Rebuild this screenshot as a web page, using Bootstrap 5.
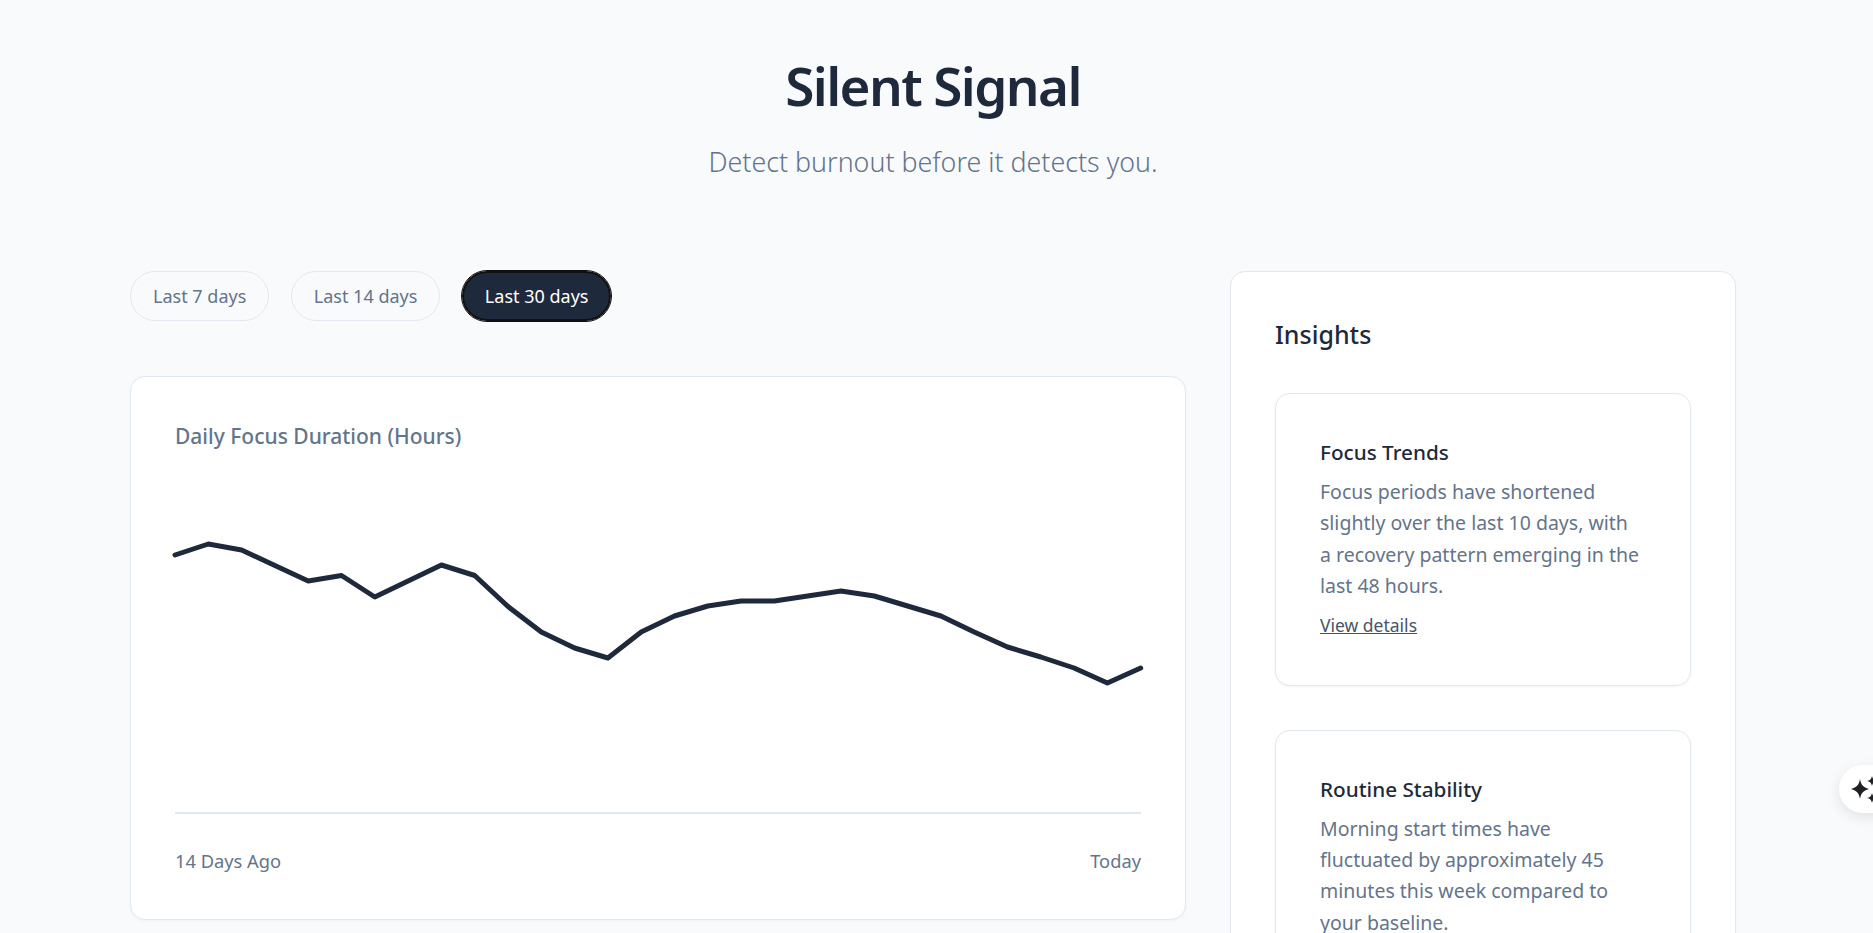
<!DOCTYPE html>
<html lang="en">

<head>
    <meta charset="UTF-8">
    <meta name="viewport" content="width=device-width, initial-scale=1.0">
    <title>Silent Signal</title>
    <link href="https://cdn.jsdelivr.net/npm/bootstrap@5.3.0/dist/css/bootstrap.min.css" rel="stylesheet">
    <style>
        html, body {
            height: 100vh;
            overflow: hidden;
        }
        body {
            background-color: #f8fafc;
            color: #1e293b;
            font-family: "Noto Sans", "Open Sans", sans-serif;
            padding-right: 7px;
        }
        .page-wrap {
            width: 1606px;
            margin: 0 auto;
        }
        .page-head {
            padding-top: 50px;
            height: 271px;
        }
        .page-title {
            font-size: 53px;
            font-weight: 560;
            line-height: 72px;
            margin-bottom: 22px;
            letter-spacing: -1.6px;
        }
        .page-sub {
            font-size: 26.8px;
            font-weight: 300;
            line-height: 36px;
            color: #64748b;
            margin: 0;
        }
        .main-col {
            width: 1056px;
        }
        .side-col {
            width: 506px;
        }
        .range-btn {
            height: 50px;
            padding: 0 22px;
            font-size: 18px;
            color: #64748b;
            background: transparent;
            border: 1px solid #e2e8f0;
            border-radius: 25px;
        }
        .range-btn.is-on {
            padding: 0 21px;
            color: #fff;
            background: #1e293b;
            border: 2px solid #111;
            outline: 1px solid #111;
        }
        .range-row {
            gap: 21.5px;
            height: 105px;
        }
        .panel-box {
            background: #fff;
            border: 1px solid #e2e8f0;
            border-radius: 15px;
            box-shadow: 0 1px 3px rgba(0, 0, 0, .04);
        }
        .chart-box {
            height: 544px;
            padding: 44px;
        }
        .chart-title {
            font-size: 21px;
            font-weight: 500;
            color: #64748b;
            line-height: 30px;
            margin: 0;
        }
        .chart-area {
            height: 363px;
            border-bottom: 2px solid #e2e8f0;
        }
        .chart-area svg {
            display: block;
            overflow: visible;
        }
        .chart-axis {
            font-size: 18.3px;
            line-height: 26px;
            color: #64748b;
            margin-top: 34px;
        }
        .side-box {
            padding: 44px;
        }
        .side-title {
            font-size: 25px;
            font-weight: 500;
            line-height: 36px;
            margin-bottom: 41px;
        }
        .insight-box {
            padding: 44px;
            margin-bottom: 44px;
            box-shadow: 0 1px 3px rgba(0, 0, 0, .05);
        }
        .insight-title {
            font-size: 20.7px;
            font-weight: 500;
            line-height: 28px;
            margin-bottom: 10px;
        }
        .insight-text {
            font-size: 19.5px;
            line-height: 31.4px;
            color: #64748b;
            margin-bottom: 7px;
            max-width: 321px;
        }
        .insight-link {
            display: block;
            font-size: 17.5px;
            line-height: 32px;
            color: #475569;
        }
        .spark-btn {
            position: fixed;
            left: 1839px;
            top: 765px;
            width: 70px;
            height: 48px;
            background: #fff;
            border-radius: 24px;
            box-shadow: 0 4px 14px rgba(0, 0, 0, .1);
        }
        .spark-btn svg {
            display: block;
            margin: 10px 0 0 10px;
        }
    </style>
</head>

<body>
    <div class="page-wrap">
        <!-- header -->
        <header class="page-head text-center">
            <h1 class="page-title">Silent Signal</h1>
            <p class="page-sub">Detect burnout before it detects you.</p>
        </header>

        <div class="d-flex justify-content-between align-items-start">
            <!-- left side -->
            <div class="main-col">
                <div class="range-row d-flex align-items-start">
                    <button type="button" class="range-btn">Last 7 days</button>
                    <button type="button" class="range-btn">Last 14 days</button>
                    <button type="button" class="range-btn is-on">Last 30 days</button>
                </div>

                <div class="panel-box chart-box">
                    <h2 class="chart-title">Daily Focus Duration (Hours)</h2>
                    <div class="chart-area">
                        <svg width="967" height="361" viewBox="0 0 967 361" fill="none">
                            <polyline id="focus-line" stroke="#1e293b" stroke-width="5" stroke-linecap="round" stroke-linejoin="round" points=""></polyline>
                        </svg>
                    </div>
                    <div class="chart-axis d-flex justify-content-between">
                        <span>14 Days Ago</span>
                        <span>Today</span>
                    </div>
                </div>
            </div>

            <!-- insights -->
            <aside class="side-col panel-box side-box">
                <h2 class="side-title">Insights</h2>
                <div class="panel-box insight-box">
                    <h3 class="insight-title">Focus Trends</h3>
                    <p class="insight-text">Focus periods have shortened slightly over the last 10 days, with a recovery pattern emerging in the last 48 hours.</p>
                    <a class="insight-link" href="#">View details</a>
                </div>
                <div class="panel-box insight-box">
                    <h3 class="insight-title">Routine Stability</h3>
                    <p class="insight-text">Morning start times have fluctuated by approximately 45 minutes this week compared to your baseline.</p>
                    <a class="insight-link" href="#">View details</a>
                </div>
            </aside>
        </div>
    </div>

    <!-- floating button -->
    <div class="spark-btn">
        <svg width="34" height="28" viewBox="0 0 34 28" fill="#1e2024">
            <path d="M11 4 C12 10 14 12 20 14 C14 16 12 18 11 24 C10 18 8 16 2 14 C8 12 10 10 11 4 Z"></path>
            <path d="M23 1 C23.6 4 25 5.4 28 6 C25 6.6 23.6 8 23 11 C22.4 8 21 6.6 18 6 C21 5.4 22.4 4 23 1 Z"></path>
            <path d="M23 18 C23.6 21 25 22.4 28 23 C25 23.6 23.6 25 23 28 C22.4 25 21 23.6 18 23 C21 22.4 22.4 21 23 18 Z"></path>
        </svg>
    </div>

    <script>
        // y values read off the chart, one per day, x step is 33.3
        const focusY = [555, 544, 550, 565.5, 581, 575.5, 597, 581, 565, 575.5, 606.5, 632, 648, 658, 632, 616, 606, 601, 601, 596, 591, 596, 606, 616, 632, 647, 657, 668, 683, 668];
        const chartTop = 451;
        const pts = focusY.map((y, i) => `${(i * 33.3).toFixed(1)},${y - chartTop}`);
        document.getElementById('focus-line').setAttribute('points', pts.join(' '));
    </script>
    <script src="https://cdn.jsdelivr.net/npm/bootstrap@5.3.0/dist/js/bootstrap.bundle.min.js"></script>
</body>

</html>
